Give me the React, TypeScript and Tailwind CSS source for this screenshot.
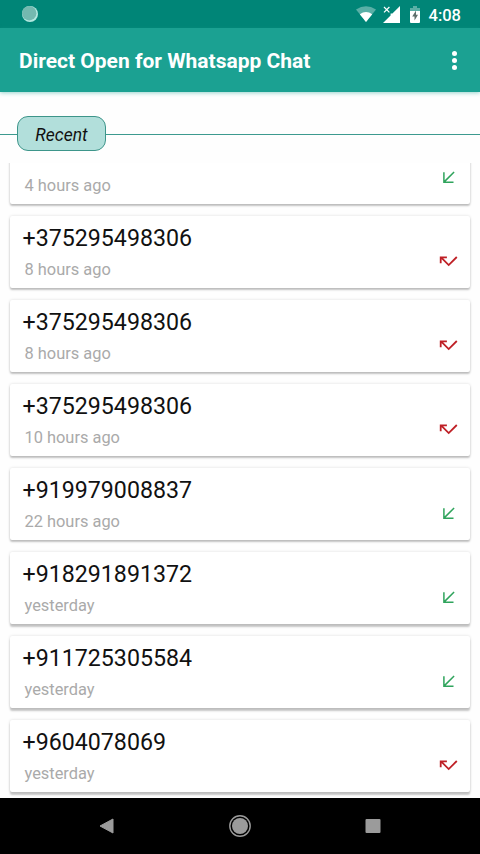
import React from 'react';
import clsx from 'clsx';

type CallType = 'incoming' | 'missed';

interface CallEntry {
  id: number;
  phone?: string;
  time: string;
  type: CallType;
}

const calls: CallEntry[] = [
  { id: 1, time: '4 hours ago', type: 'incoming' },
  { id: 2, phone: '+375295498306', time: '8 hours ago', type: 'missed' },
  { id: 3, phone: '+375295498306', time: '8 hours ago', type: 'missed' },
  { id: 4, phone: '+375295498306', time: '10 hours ago', type: 'missed' },
  { id: 5, phone: '+919979008837', time: '22 hours ago', type: 'incoming' },
  { id: 6, phone: '+918291891372', time: 'yesterday', type: 'incoming' },
  { id: 7, phone: '+911725305584', time: 'yesterday', type: 'incoming' },
  { id: 8, phone: '+9604078069', time: 'yesterday', type: 'missed' },
];

const CallIcon: React.FC<{ type: CallType }> = ({ type }) => {
  if (type === 'incoming') {
    return (
      <svg width="20" height="20" viewBox="0 0 20 20" fill="none" stroke="#2fa45c" strokeWidth="1.5">
        <path d="M15.1 5L5.2 14.9M4.9 5.2v10h9.6" />
      </svg>
    );
  }
  return (
    <svg width="20" height="20" viewBox="0 0 20 20" fill="none" stroke="#bf2026" strokeWidth="1.8">
      <path d="M17.8 6L9.7 14.1L2.3 6.7M1.7 12.3V6.3h6.2" />
    </svg>
  );
};

const StatusBar = () => (
  <div className="h-7 shrink-0 bg-[#008577] flex items-center justify-between pl-[22px] pr-[19px]">
    <svg width="16" height="16" viewBox="0 0 16 16">
      <circle cx="8" cy="8" r="8" fill="#b4e8e1" />
      <circle cx="7.2" cy="7.2" r="7.2" fill="#74b9b0" />
    </svg>
    <div className="flex items-center">
      <svg width="20" height="17" viewBox="0 0 20 17">
        <path d="M10 16L0 3.6Q10 -3 20 3.6Z" fill="#fff" fillOpacity="0.35" />
        <path d="M10 16L3.8 8.2Q10 3.6 16.2 8.2Z" fill="#fff" />
      </svg>
      <svg className="ml-[7px]" width="17" height="17" viewBox="0 0 17 17">
        <path d="M17 0V17H0L7.6 9.4V7.6H9.4Z" fill="#fff" />
        <path d="M1 1l5.4 5.4M6.4 1L1 6.4" stroke="#fff" strokeWidth="1.2" />
      </svg>
      <svg className="ml-[10px]" width="10" height="17" viewBox="0 0 10 17">
        <path d="M0 2h3V0h4v2h3v3H0z" fill="#fff" fillOpacity="0.35" />
        <path d="M0 5h10v11a1 1 0 0 1-1 1H1a1 1 0 0 1-1-1z" fill="#fff" />
        <path d="M6 4.5L2.2 10.5h2.3v4L8 8.8H6z" fill="#5f6f6c" />
      </svg>
      <span className="ml-[9px] pt-[3px] text-[16.5px] leading-7 font-medium text-white">4:08</span>
    </div>
  </div>
);

const AppBar = () => (
  <header className="relative z-10 h-16 shrink-0 bg-[#1ba192] flex items-center justify-between pl-[19px] pr-[23px] pt-1 shadow-[0_1px_4px_rgba(27,161,146,0.45)]">
    <h1 className="text-[21px] font-bold text-white">Direct Open for Whatsapp Chat</h1>
    <button className="flex flex-col items-center gap-0.5 -mt-[4px]" aria-label="More options">
      <span className="w-[5px] h-[5px] rounded-full bg-white" />
      <span className="w-[5px] h-[5px] rounded-full bg-white" />
      <span className="w-[5px] h-[5px] rounded-full bg-white" />
    </button>
  </header>
);

const SectionLabel = () => (
  <div className="h-[71px] shrink-0 flex items-center pt-[13px]">
    <div className="w-[17px] h-px bg-[#3d9a8f]" />
    <div className="w-[89px] h-[35px] mb-px rounded-[11px] border border-[#3d958a] bg-[#b2dfdb] flex items-center justify-center pt-[3px]">
      <span className="text-[17.5px] italic text-[#111]">Recent</span>
    </div>
    <div className="flex-1 h-px bg-[#3d9a8f]" />
  </div>
);

const CallCard: React.FC<{ call: CallEntry }> = ({ call }) => {
  // cards lower on the screen cast a longer shadow
  const low = call.id > 5;
  return (
    <li
      className={clsx(
        'h-[72px] shrink-0 rounded-[2px] bg-white flex items-start justify-between pl-[12.5px] pr-[11px]',
        low
          ? 'shadow-[0_3px_2px_rgba(0,0,0,0.22),0_0_3px_rgba(0,0,0,0.14)]'
          : 'shadow-[0_2px_2px_rgba(0,0,0,0.22),0_0_3px_rgba(0,0,0,0.14)]'
      )}
    >
      <div>
        <p className="h-[38px] pt-[7px] text-[23.2px] leading-[30px] text-[#111]">{call.phone}</p>
        <p className="pl-[2px] pt-[6px] text-[16.4px] leading-5 text-[#aaa]">{call.time}</p>
      </div>
      <div className="pt-[35px]">
        <CallIcon type={call.type} />
      </div>
    </li>
  );
};

const NavBar = () => (
  <nav className="h-14 shrink-0 bg-black flex items-center justify-between pl-[99px] pr-[99px]">
    <svg width="16" height="16" viewBox="0 0 16 16">
      <path d="M14 1v14L1 8z" fill="#9b9b9b" stroke="#9b9b9b" strokeLinejoin="round" />
    </svg>
    <svg width="22" height="22" viewBox="0 0 22 22">
      <circle cx="11" cy="11" r="10.2" fill="none" stroke="#9b9b9b" strokeWidth="1.4" />
      <circle cx="11" cy="11" r="8" fill="#9b9b9b" />
    </svg>
    <svg width="16" height="16" viewBox="0 0 16 16">
      <rect x="0.5" y="1" width="15" height="14" rx="1" fill="#9b9b9b" />
    </svg>
  </nav>
);

export default function App() {
  return (
    <div className="w-[480px] h-[854px] flex flex-col overflow-hidden bg-[#fefefe] font-[Roboto,sans-serif]">
      <StatusBar />
      <AppBar />
      <SectionLabel />
      <main className="flex-1 min-h-0 overflow-hidden">
        <ul className="-mt-[31px] px-[10px] flex flex-col gap-[12px]">
          {calls.map((call) => (
            <CallCard key={call.id} call={call} />
          ))}
        </ul>
      </main>
      <NavBar />
    </div>
  );
}
